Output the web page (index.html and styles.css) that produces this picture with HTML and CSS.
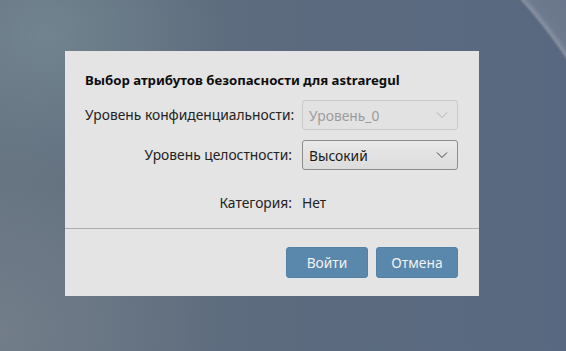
FILE: index.html
```html
<!DOCTYPE html>
<html lang="ru">
<head>
<meta charset="utf-8">
<link rel="stylesheet" href="styles.css">
</head>
<body>
<div class="desktop">
  <div class="dialog">
    <div class="content">
      <div class="title">Выбор атрибутов безопасности для astraregul</div>
      <div class="form">
        <div class="label">Уровень конфиденциальности:</div>
        <div class="combo disabled"><span>Уровень_0</span>
          <svg class="chev" width="12" height="8" viewBox="0 0 12 8"><path d="M1 1.5 L6 6.5 L11 1.5" fill="none" stroke="#b4b4b4" stroke-width="1"/></svg>
        </div>
        <div class="label">Уровень целостности:</div>
        <div class="combo"><span>Высокий</span>
          <svg class="chev" width="12" height="8" viewBox="0 0 12 8"><path d="M1 1.5 L6 6.5 L11 1.5" fill="none" stroke="#444" stroke-width="1"/></svg>
        </div>
        <div class="label cat">Категория:</div>
        <div class="value cat">Нет</div>
      </div>
    </div>
    <div class="sep"></div>
    <div class="footer">
      <button class="btn">Войти</button>
      <button class="btn">Отмена</button>
    </div>
  </div>
</div>
</body>
</html>
```

FILE: styles.css
```css
html, body {
  margin: 0;
  padding: 0;
}
body {
  width: 566px;
  height: 351px;
  overflow: hidden;
  font-family: "Noto Sans", "DejaVu Sans", sans-serif;
}
.desktop {
  width: 566px;
  height: 351px;
  box-sizing: border-box;
  padding: 51px 0 0 65px;
  background:
    radial-gradient(circle at 169px 320px, transparent 474px, rgba(170,175,185,0.55) 477px, rgba(150,156,168,0.35) 482px, rgba(140,148,160,0.25) 520px),
    radial-gradient(ellipse 180px 150px at 45px 35px, rgba(120,140,150,0.7), rgba(120,140,150,0) 100%),
    radial-gradient(ellipse 220px 200px at 0px 330px, rgba(118,128,140,0.8), rgba(118,128,140,0) 100%),
    linear-gradient(90deg, #63717f 0%, #5c6b7e 50%, #586880 100%);
}
.dialog {
  width: 414px;
  height: 245px;
  background: #e4e4e4;
  display: flex;
  flex-direction: column;
  box-sizing: border-box;
}
.content {
  padding: 20px 21px 0 20px;
}
.title {
  font-size: 13.2px;
  font-weight: bold;
  line-height: 18px;
  color: #0d0d0d;
}
.form {
  margin-top: 11px;
  display: grid;
  grid-template-columns: 207px 156px;
  column-gap: 10px;
  row-gap: 10px;
  align-items: center;
}
.label {
  text-align: right;
  font-size: 13.8px;
  color: #222;
  line-height: 18px;
  white-space: nowrap;
}
.value {
  font-size: 13.8px;
  color: #222;
  line-height: 18px;
}
.cat {
  margin-top: 14px;
}
.combo {
  height: 30px;
  box-sizing: border-box;
  border: 1px solid #8c8c8c;
  border-radius: 3px;
  background: linear-gradient(#e9e9e9, #dcdcdc);
  display: flex;
  align-items: center;
  justify-content: space-between;
  padding: 0 9px 0 6px;
  font-size: 13.8px;
  color: #1a1a1a;
}
.combo.disabled {
  border-color: #cacaca;
  background: #e2e2e2;
  color: #9c9c9c;
}
.chev {
  display: block;
}
.sep {
  margin-top: 16px;
  height: 1px;
  background: #adadad;
}
.footer {
  display: flex;
  justify-content: flex-end;
  gap: 8px;
  padding: 18px 21px 0 0;
}
.btn {
  width: 82px;
  height: 31px;
  box-sizing: border-box;
  border: 1px solid #5382a8;
  border-radius: 3px;
  background: #5a87ac;
  color: #f2f2f2;
  font-family: "Noto Sans", "DejaVu Sans", sans-serif;
  font-size: 13.8px;
  padding: 0;
}
```
